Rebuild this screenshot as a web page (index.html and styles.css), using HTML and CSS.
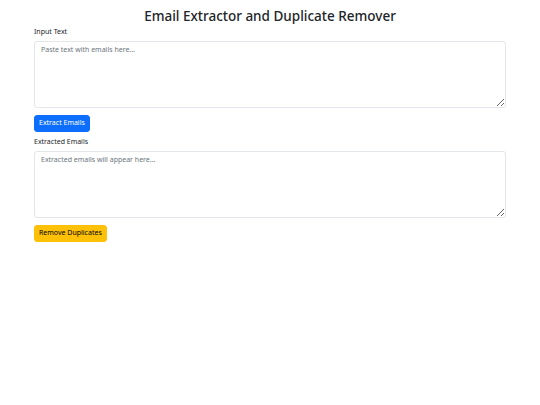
FILE: index.html
```html
<!DOCTYPE html>
<html lang="en">
<head>
<meta charset="utf-8">
<title>Email Extractor and Duplicate Remover</title>
<link rel="stylesheet" href="styles.css">
</head>
<body>
<div class="container">
  <h1 class="title">Email Extractor and Duplicate Remover</h1>
  <div class="group">
    <label class="label" for="inputText">Input Text</label>
    <textarea id="inputText" class="field" placeholder="Paste text with emails here..."></textarea>
  </div>
  <button class="btn btn-primary">Extract Emails</button>
  <div class="group">
    <label class="label" for="outputText">Extracted Emails</label>
    <textarea id="outputText" class="field" placeholder="Extracted emails will appear here..."></textarea>
  </div>
  <button class="btn btn-warning">Remove Duplicates</button>
</div>
</body>
</html>
```

FILE: styles.css
```css
* { box-sizing: border-box; }
html, body { margin: 0; padding: 0; background: #fff; }
body {
  font-family: "Noto Sans", "Open Sans", sans-serif;
  color: #212529;
  font-size: 7px;
  line-height: 1.5;
}
.container {
  width: 472px;
  margin: 0 auto;
  padding-top: 8px;
  display: flex;
  flex-direction: column;
  align-items: flex-start;
}
.title {
  align-self: stretch;
  text-align: center;
  font-size: 13.5px;
  font-weight: 500;
  line-height: 1.2;
  margin: 0 0 3px;
}
.group {
  align-self: stretch;
  display: flex;
  flex-direction: column;
  margin-bottom: 7px;
}
.label {
  font-size: 7px;
  margin-bottom: 3px;
}
.field {
  height: 67px;
  width: 100%;
  border: 1px solid #e3e6ea;
  border-radius: 3px;
  padding: 3px 6px;
  font-family: inherit;
  font-size: 7px;
  line-height: 1.5;
  color: #212529;
  resize: vertical;
  margin: 0;
}
.field::placeholder { color: #6c757d; }
.btn {
  font-family: inherit;
  font-size: 7px;
  line-height: 1.5;
  padding: 2.5px 4px;
  border-radius: 3px;
  border: 1px solid transparent;
  cursor: pointer;
  margin-bottom: 5px;
}
.btn-primary { background: #0d6efd; border-color: #0d6efd; color: #fff; }
.btn-warning { background: #ffc107; border-color: #ffc107; color: #000; }
```
